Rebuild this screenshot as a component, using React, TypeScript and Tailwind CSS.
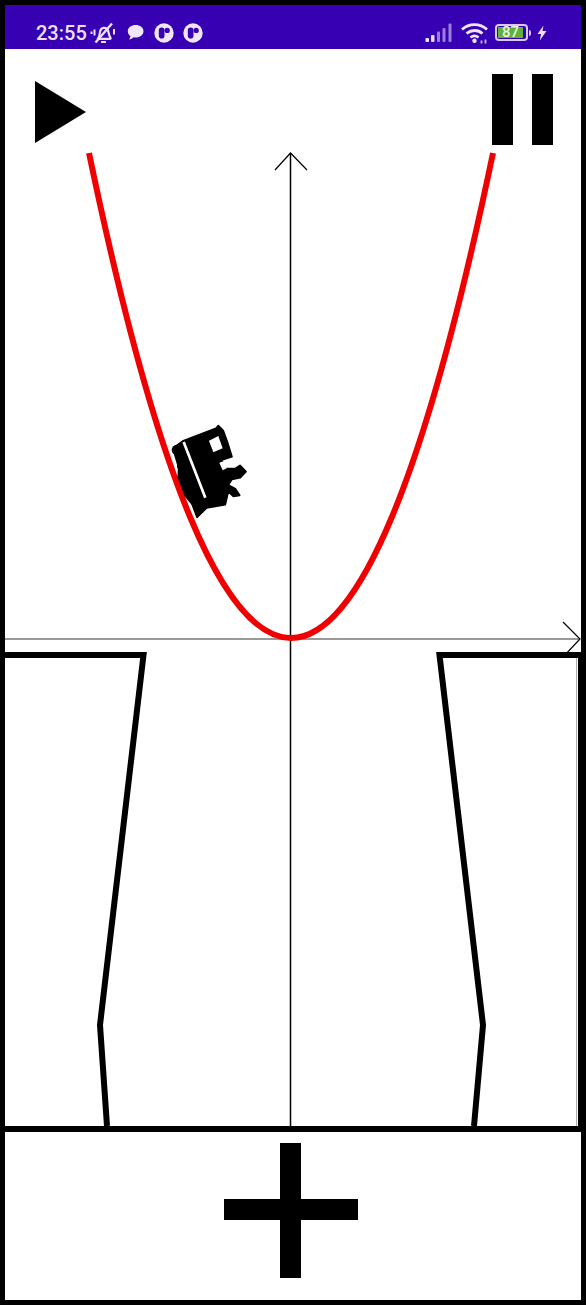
import React from "react";

function BellOff() {
  return (
    <svg width="26" height="24" viewBox="0 0 26 24" fill="none" stroke="#ece0fb" strokeWidth="2.200" className="ml-[3px]">
      <path d="M8 17.500c1.500-1.500 1.600-3 1.800-5.500.3-3 2-5 4-5.200 2.300-.2 4 1.500 4.500 3.700.4 2 .7 4.500 2.200 6.300.5.700 0 1-.7 1H8.500c-.6 0-.9-.1-.5-.3z" />
      <path d="M11 21h5" strokeWidth="2" />
      <path d="M5.500 21.500 22 2.500" strokeWidth="2.400" />
      <path d="M4.500 8.500v6M1.500 10.500v2.500M24 8v5.500" strokeWidth="2" />
    </svg>
  );
}

function Chat() {
  return (
    <svg width="17" height="17" viewBox="0 0 17 17" className="ml-[11px]">
      <path d="M8.700 1C13 1 16.500 3.500 16.500 7.200S13 13.500 8.700 13.500c-.8 0-1.500-.1-2.200-.2C5.500 14.500 3.800 15.500 2 15.500c.8-.9 1.300-2 1.400-3.400C1.800 11 .8 9.200.8 7.200.8 3.500 4.400 1 8.700 1z" fill="#f0e6fb" />
    </svg>
  );
}

function Badge({ className }: { className: string }) {
  return (
    <svg width="20" height="20" viewBox="0 0 20 20" className={className}>
      <circle cx="10" cy="10" r="9.700" fill="#f0e6fb" />
      <rect x="4.800" y="4.500" width="5.700" height="11" rx="2.800" fill="#3700b3" />
      <circle cx="13.200" cy="7.400" r="2.600" fill="#3700b3" />
    </svg>
  );
}

function Signal() {
  return (
    <svg width="28" height="20" viewBox="0 0 28 20">
      <rect x="0.500" y="15" width="3.500" height="4" rx="1" fill="#f0e6fb" />
      <rect x="6" y="12" width="3.500" height="7" rx="1" fill="#e6d8fa" />
      <rect x="12" y="8.500" width="3" height="10.500" rx="1" fill="#9a7fdc" />
      <rect x="17.500" y="5" width="3" height="14" rx="1" fill="#9a7fdc" />
      <rect x="23.500" y="0.500" width="3" height="18.500" rx="1" fill="#9a7fdc" />
    </svg>
  );
}

function Wifi() {
  return (
    <svg width="28" height="22" viewBox="0 0 28 22" fill="none" stroke="#f0e6fb" strokeWidth="2.800" className="ml-[8px]">
      <path d="M1 7.500C8 1 19 1 26 7.500" />
      <path d="M5.500 11.500C10.500 7.500 17 7.500 21.500 11.500" />
      <path d="M9.500 15.500C12 13.500 15 13.500 17.500 15.500" />
      <circle cx="13.500" cy="18.800" r="2.200" fill="#f0e6fb" stroke="none" />
      <path d="M20.500 21.500v-3M24.500 21.500v-4" stroke="#c9b6ee" strokeWidth="1.800" />
    </svg>
  );
}

function Battery() {
  return (
    <div className="ml-[6px] flex items-center">
      <div className="w-[33px] h-[17px] rounded-[4px] border-[2px] border-[#d9c9f5] p-[1px] flex">
        <div className="w-[25px] h-full bg-[#5fb03c] flex items-center justify-center text-[15px] leading-none font-medium text-[#e9f5d8]">87</div>
      </div>
      <div className="w-[2px] h-[6px] ml-[1px] bg-[#d9c9f5] rounded-r-sm" />
    </div>
  );
}

function Bolt() {
  return (
    <svg width="10" height="16" viewBox="0 0 10 16" className="ml-[6px]">
      <path d="M6.500 0.500 0.500 9h3.500L2.800 15.500 9.500 6H5.500z" fill="#ece0fb" />
    </svg>
  );
}

function Train() {
  return (
    <g transform="translate(150 410) scale(0.3333)">
      <path
        d="M72 112 100 92 198 55 205 47 220 62 232 95 246 140 216 150 226 176 256 175 270 166 288 185 271 203 246 208 235 225 256 236 269 256 250 259 235 245 226 284 170 294 141 322 126 282 106 258 85 202 86 172 72 126Z"
        fill="#000"
        stroke="#000"
        strokeWidth="5"
        strokeLinejoin="round"
      />
      <circle cx="80" cy="120" r="15" fill="#000" />
      <circle cx="96" cy="168" r="15" fill="#000" />
      <circle cx="106" cy="205" r="16" fill="#000" />
      <circle cx="122" cy="245" r="15" fill="#000" />
      <circle cx="134" cy="274" r="13" fill="#000" />
      <path d="M101 96 166 263" stroke="#fff" strokeWidth="8" />
      <path d="M177 92 205 78 218 115 190 127Z" fill="#fff" />
      <path d="M208 158 224 152 230 175 218 181Z" fill="#fff" />
    </g>
  );
}

export default function App() {
  return (
    <div className="w-[586px] h-[1305px] border-[5px] border-black bg-white flex flex-col font-['Roboto',sans-serif]">
      <div className="h-[44px] shrink-0 bg-[#3700b3] flex items-center justify-between pt-[11px] pl-[31px] pr-[34px]">
        <div className="flex items-center">
          <span className="text-[20px] leading-none font-medium text-[#ece0fb]">23:55</span>
          <BellOff />
          <Chat />
          <Badge className="ml-[10px]" />
          <Badge className="ml-[9px]" />
        </div>
        <div className="flex items-center">
          <Signal />
          <Wifi />
          <Battery />
          <Bolt />
        </div>
      </div>

      <div className="relative h-[1077px] shrink-0">
        <svg width="576" height="1077" viewBox="5 49 576 1077" fill="none" className="block">
          <path d="M5 639H580" stroke="#999" strokeWidth="2" />
          <path d="M290.500 153V1126" stroke="#000" strokeWidth="1.500" />
          <path d="M275 170 290.500 153 307 170" stroke="#000" strokeWidth="1.200" />
          <path d="M563 622 580 639 564 656" stroke="#000" strokeWidth="1.200" />
          <path d="M89 153Q291 1123 493 153" stroke="#f00000" strokeWidth="6" />
          <path d="M5 655H143.500L100 1025 107 1126" stroke="#000" strokeWidth="6" />
          <path d="M581 655H439.500L483 1025 474 1126" stroke="#000" strokeWidth="6" />
          <path d="M579.500 655V1126" stroke="#000" strokeWidth="3" />
          <path d="M576.500 658V1126" stroke="#aaa" strokeWidth="1" />
          <Train />
        </svg>

        <div className="absolute left-0 right-0 top-[25px] flex justify-between items-start pl-[30px] pr-[28px]">
          <svg width="51" height="62" viewBox="0 0 51 62" className="mt-[7px]">
            <path d="M0 0 51 31 0 62Z" fill="#000" />
          </svg>
          <div className="flex gap-[19px]">
            <div className="w-[21px] h-[71px] bg-black" />
            <div className="w-[21px] h-[71px] bg-black" />
          </div>
        </div>
      </div>

      <div className="flex-1 border-t-[6px] border-black flex items-start justify-center pt-[11px] pr-[4px]">
        <div className="relative w-[134px] h-[135px]">
          <div className="absolute left-[56px] top-0 w-[21px] h-full bg-black" />
          <div className="absolute left-0 top-[56px] w-full h-[21px] bg-black" />
        </div>
      </div>
    </div>
  );
}
